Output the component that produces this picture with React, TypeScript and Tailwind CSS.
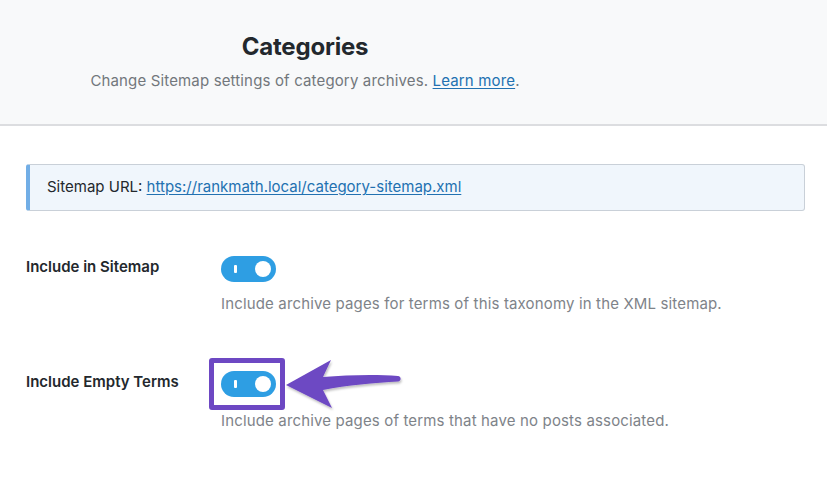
import React from "react";

function Toggle() {
  return (
    <div className="relative w-[55px] h-[26px] rounded-full bg-[#2e9ee3]">
      <span className="absolute left-[13px] top-[9px] w-[3px] h-[8px] rounded-[1px] bg-white" />
      <span className="absolute left-[34px] top-[5px] w-[16px] h-[16px] rounded-full bg-white" />
    </div>
  );
}

function Arrow() {
  return (
    <svg width="118" height="52" viewBox="0 0 118 52" className="absolute left-[64px] top-[-13px] overflow-visible">
      <defs>
        <filter id="sh" x="-10%" y="-20%" width="130%" height="150%">
          <feDropShadow dx="1" dy="2" stdDeviation="1.2" floodColor="#000" floodOpacity="0.25" />
        </filter>
      </defs>
      <path
        d="M1 27 L46 2 L38 19 C62 17 90 16 113 18 C116.5 18.5 116.5 23 113 23.5 C90 25 62 27 38 32 L47 50 Z"
        fill="#6d48c3"
        filter="url(#sh)"
      />
    </svg>
  );
}

function SettingRow({
  label,
  desc,
  highlight,
}: {
  label: string;
  desc: string;
  highlight?: boolean;
}) {
  return (
    <div className="flex">
      <div className="w-[195px] shrink-0 pt-[1px] text-[15px] leading-[20px] font-semibold text-[#23282d]">
        {label}
      </div>
      <div className="flex flex-col">
        <div className="relative w-[55px]">
          <Toggle />
          {highlight && (
            <>
              <div className="absolute left-[-12px] right-[-9px] top-[-13px] bottom-[-13px] border-[5px] border-[#6d48c3] rounded-[3px]" />
              <Arrow />
            </>
          )}
        </div>
        <p className={`${highlight ? "mt-[13px]" : "mt-[11px]"} text-[15px] leading-[22px] tracking-[0.15px] text-[#7e8389]`}>
          {desc}
        </p>
      </div>
    </div>
  );
}

export default function App() {
  return (
    <div className="w-[827px] h-[478px] bg-white overflow-hidden" style={{ fontFamily: "Inter, 'Noto Sans', sans-serif" }}>
      {/* Header */}
      <div className="h-[126px] bg-[#f8f9fa] border-b-2 border-[#dcdde0]">
        <div className="w-[610px] flex flex-col items-center pt-[31px]">
          <h1 className="text-[24px] leading-[32px] font-bold text-[#23282d] tracking-[-0.2px]">Categories</h1>
          <p className="mt-[7px] text-[15px] leading-[22px] tracking-[0.15px] text-[#72777c]">
            Change Sitemap settings of category archives.{" "}
            <a className="text-[#2271b1] underline underline-offset-2">Learn more</a>.
          </p>
        </div>
      </div>

      <div className="pl-[26px] pr-[22px] pt-[38px]">
        {/* Info box */}
        <div className="h-[47px] flex items-center bg-[#f0f6fc] border border-[#c9d0d8] border-l-[4px] border-l-[#72aee6] rounded-[3px] pl-[17px] text-[15px] text-[#23282d]">
          Sitemap URL:&nbsp;
          <a className="text-[#2271b1] underline underline-offset-2">https://rankmath.local/category-sitemap.xml</a>
        </div>

        <div className="mt-[45px] flex flex-col gap-[56px]">
          <SettingRow
            label="Include in Sitemap"
            desc="Include archive pages for terms of this taxonomy in the XML sitemap."
          />
          <SettingRow
            label="Include Empty Terms"
            desc="Include archive pages of terms that have no posts associated."
            highlight
          />
        </div>
      </div>
    </div>
  );
}
